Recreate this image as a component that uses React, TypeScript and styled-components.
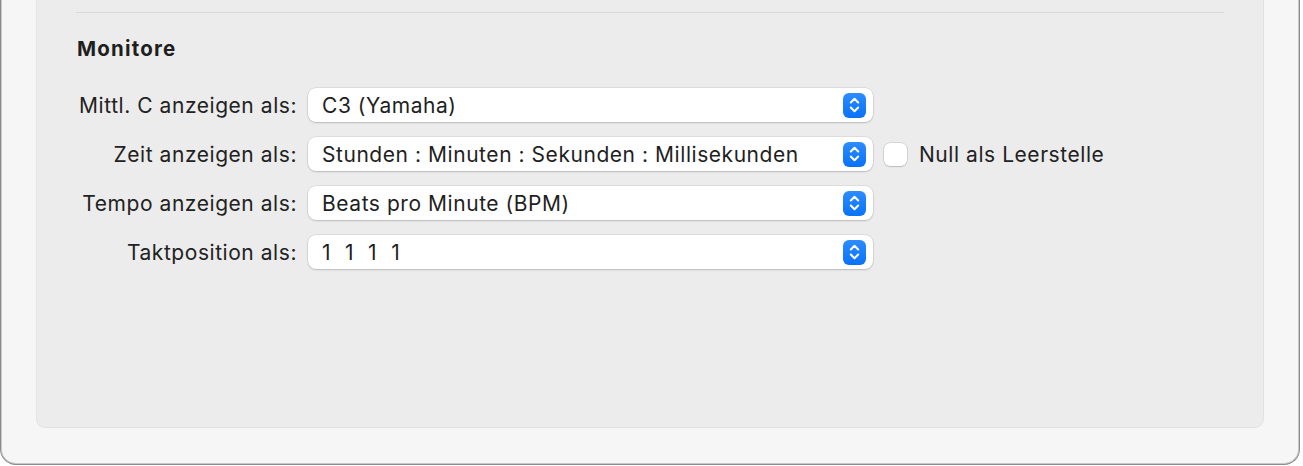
import React from "react";
import styled, { createGlobalStyle } from "styled-components";

const Global = createGlobalStyle`
  html, body { margin: 0; padding: 0; background: #ffffff; }
  body { font-family: Inter, "Noto Sans", "Liberation Sans", sans-serif; -webkit-font-smoothing: antialiased; }
  * { box-sizing: border-box; }
`;

const Window = styled.div`
  width: 1300px;
  height: 465px;
  background: #f6f6f6;
  border: 1px solid #8c8c8c;
  border-top: none;
  border-radius: 0 0 16px 16px;
  box-shadow: inset 1px 0 0 #c9c9c9, inset -1px 0 0 #c9c9c9, inset 0 -1px 0 #c9c9c9;
  padding: 0 35px;
`;

const Panel = styled.div`
  height: 428px;
  background: #ececec;
  border: 1px solid #e2e2e2;
  border-top: none;
  border-radius: 0 0 9px 9px;
  padding: 12px 39px 0;
  display: flex;
  flex-direction: column;
`;

const Separator = styled.div`
  height: 1px;
  background: #d9d9d9;
`;

const SectionTitle = styled.div`
  margin-top: 24px;
  padding-left: 1px;
  font-size: 20.5px;
  line-height: 24px;
  font-weight: 700;
  color: #1f1f1f;
  letter-spacing: 1.2px;
`;

const Rows = styled.div`
  margin-top: 27px;
  display: flex;
  flex-direction: column;
  gap: 15px;
`;

const Row = styled.div`
  display: flex;
  align-items: center;
  height: 34px;
`;

const Label = styled.div`
  width: 221px;
  text-align: right;
  font-size: 21px;
  color: #222;
  letter-spacing: 0.55px;
  white-space: nowrap;
`;

const Popup = styled.div`
  margin-left: 11px;
  width: 565px;
  height: 34px;
  background: #ffffff;
  border-radius: 8px;
  box-shadow: 0 0 0 0.5px rgba(0, 0, 0, 0.12), 0 1px 2px rgba(0, 0, 0, 0.16);
  display: flex;
  align-items: center;
  padding: 0 7px 0 14px;
`;

const PopupText = styled.div<{ $wordSpacing?: number }>`
  flex: 1;
  font-size: 21px;
  color: #1f1f1f;
  letter-spacing: 0.55px;
  word-spacing: ${(p) => p.$wordSpacing ?? 0}px;
  white-space: nowrap;
`;

const Stepper = styled.div`
  width: 23px;
  height: 25px;
  border-radius: 6px;
  background: linear-gradient(#2d8cff, #0a72f7);
  display: flex;
  align-items: center;
  justify-content: center;
`;

const Checkbox = styled.div`
  margin-left: 11px;
  width: 23px;
  height: 23px;
  border-radius: 6px;
  background: #ffffff;
  box-shadow: 0 0 0 0.5px rgba(0, 0, 0, 0.18), 0 1px 1.5px rgba(0, 0, 0, 0.12);
`;

const CheckLabel = styled.div`
  margin-left: 12px;
  font-size: 21px;
  color: #222;
  letter-spacing: 0.55px;
  white-space: nowrap;
`;

const Chevrons = () => (
  <svg width="13" height="18" viewBox="0 0 13 18" fill="none">
    <path d="M2.8 6.5 L6.5 2.8 L10.2 6.5" stroke="#fff" strokeWidth="2" strokeLinecap="round" strokeLinejoin="round" />
    <path d="M2.8 11.5 L6.5 15.2 L10.2 11.5" stroke="#fff" strokeWidth="2" strokeLinecap="round" strokeLinejoin="round" />
  </svg>
);

const rows = [
  { label: "Mittl. C anzeigen als:", value: "C3 (Yamaha)" },
  { label: "Zeit anzeigen als:", value: "Stunden : Minuten : Sekunden : Millisekunden", check: "Null als Leerstelle" },
  { label: "Tempo anzeigen als:", value: "Beats pro Minute (BPM)" },
  { label: "Taktposition als:", value: "1 1 1 1", wordSpacing: 7.5 },
];

export default function App() {
  return (
    <>
      <Global />
      <Window>
        <Panel>
          <Separator />
          <SectionTitle>Monitore</SectionTitle>
          <Rows>
            {rows.map((r) => (
              <Row key={r.label}>
                <Label>{r.label}</Label>
                <Popup>
                  <PopupText $wordSpacing={r.wordSpacing}>{r.value}</PopupText>
                  <Stepper>
                    <Chevrons />
                  </Stepper>
                </Popup>
                {r.check && (
                  <>
                    <Checkbox />
                    <CheckLabel>{r.check}</CheckLabel>
                  </>
                )}
              </Row>
            ))}
          </Rows>
        </Panel>
      </Window>
    </>
  );
}
